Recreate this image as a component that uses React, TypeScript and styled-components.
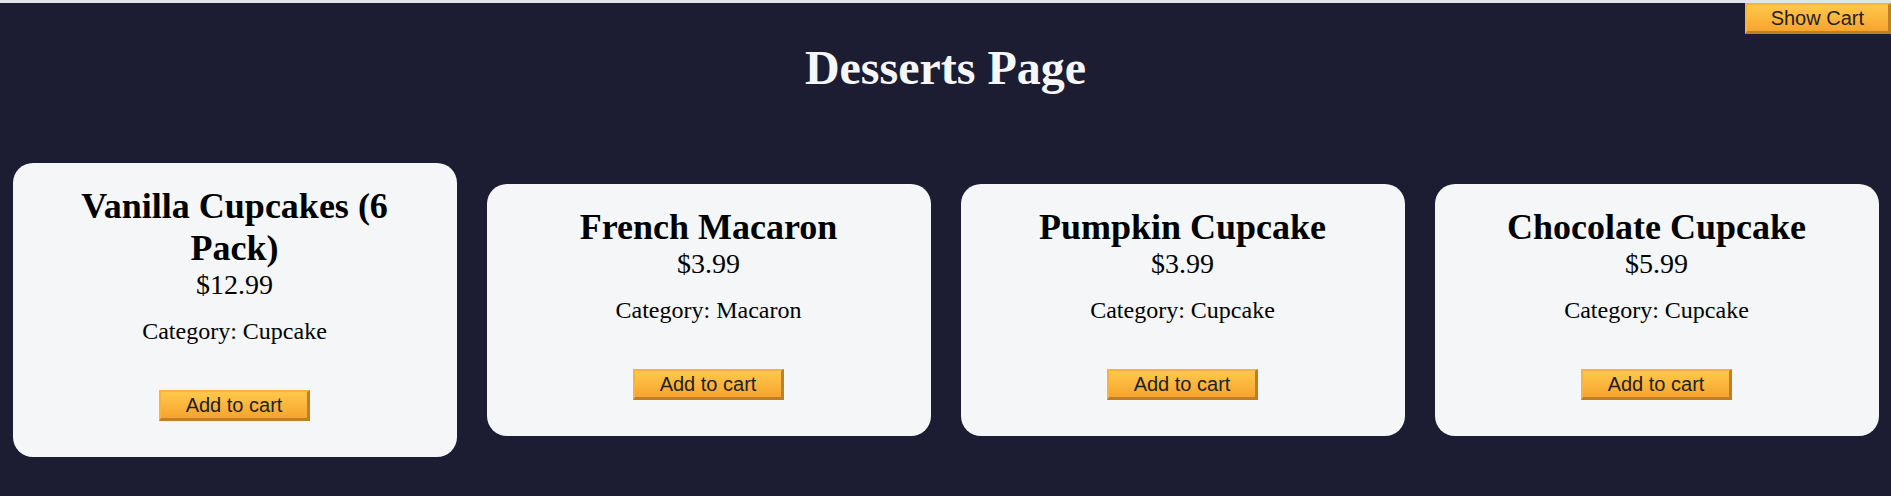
import React from "react";
import styled, { createGlobalStyle } from "styled-components";

type Dessert = { name: string; price: string; category: string };

const desserts: Dessert[] = [
    { name: "Vanilla Cupcakes (6 Pack)", price: "$12.99", category: "Cupcake" },
    { name: "French Macaron", price: "$3.99", category: "Macaron" },
    { name: "Pumpkin Cupcake", price: "$3.99", category: "Cupcake" },
    { name: "Chocolate Cupcake", price: "$5.99", category: "Cupcake" },
];

const GlobalStyle = createGlobalStyle`
    html, body{
        margin: 0;
        padding: 0;
        background: #e3e4ea;
    }
    body{
        font-family: "Liberation Serif", "Times New Roman", serif;
    }
`;

export default function App(){
    return(
        <>
            <GlobalStyle/>
            <Page>
                <TopBar>
                    <OrangeButton $pad={24}>Show Cart</OrangeButton>
                </TopBar>
                <Title>Desserts Page</Title>
                <CardRow>
                    {desserts.map((d) => (
                        <Card key={d.name}>
                            <CardTitle>{d.name}</CardTitle>
                            <Price>{d.price}</Price>
                            <Category>Category: {d.category}</Category>
                            <OrangeButton $width={151} className="add">Add to cart</OrangeButton>
                        </Card>
                    ))}
                </CardRow>
            </Page>
        </>
    );
}

const Page = styled.div`
    margin-top: 3px;
    height: 493px;
    background: #1c1c33;
    box-sizing: border-box;
    overflow: hidden;
`;

const TopBar = styled.div`
    display: flex;
    justify-content: flex-end;
    height: 31px;
`;

const OrangeButton = styled.button<{ $pad?: number; $width?: number }>`
    box-sizing: border-box;
    height: 31px;
    ${(p) => p.$width ? `width: ${p.$width}px;` : ""}
    padding: 0 ${(p) => p.$pad ?? 0}px;
    font-family: "Liberation Sans", Arial, sans-serif;
    font-size: 20px;
    line-height: 23px;
    color: #222;
    background: linear-gradient(to bottom, #ffc84c, #f6a42e);
    border-style: solid;
    border-width: 2px 3px 3px 2px;
    border-color: #f9b23c #c07f24 #c07f24 #f9b23c;
    cursor: pointer;
    &.add{
        margin-top: 45px;
    }
`;

const Title = styled.h1`
    margin: 6px 0 0;
    text-align: center;
    font-size: 48px;
    font-weight: 700;
    color: #f4f6f8;
`;

const CardRow = styled.div`
    display: flex;
    justify-content: center;
    align-items: center;
    gap: 30px;
    margin-top: 68px;
`;

const Card = styled.div`
    box-sizing: border-box;
    width: 444px;
    flex: none;
    background: #f4f6f8;
    border-radius: 20px;
    padding: 22px 24px 36px;
    display: flex;
    flex-direction: column;
    align-items: center;
    text-align: center;
    color: #000;
`;

const CardTitle = styled.h2`
    margin: 0;
    font-size: 36px;
    font-weight: 700;
`;

const Price = styled.div`
    font-size: 28px;
`;

const Category = styled.p`
    margin: 17px 0 0;
    font-size: 24px;
`;
